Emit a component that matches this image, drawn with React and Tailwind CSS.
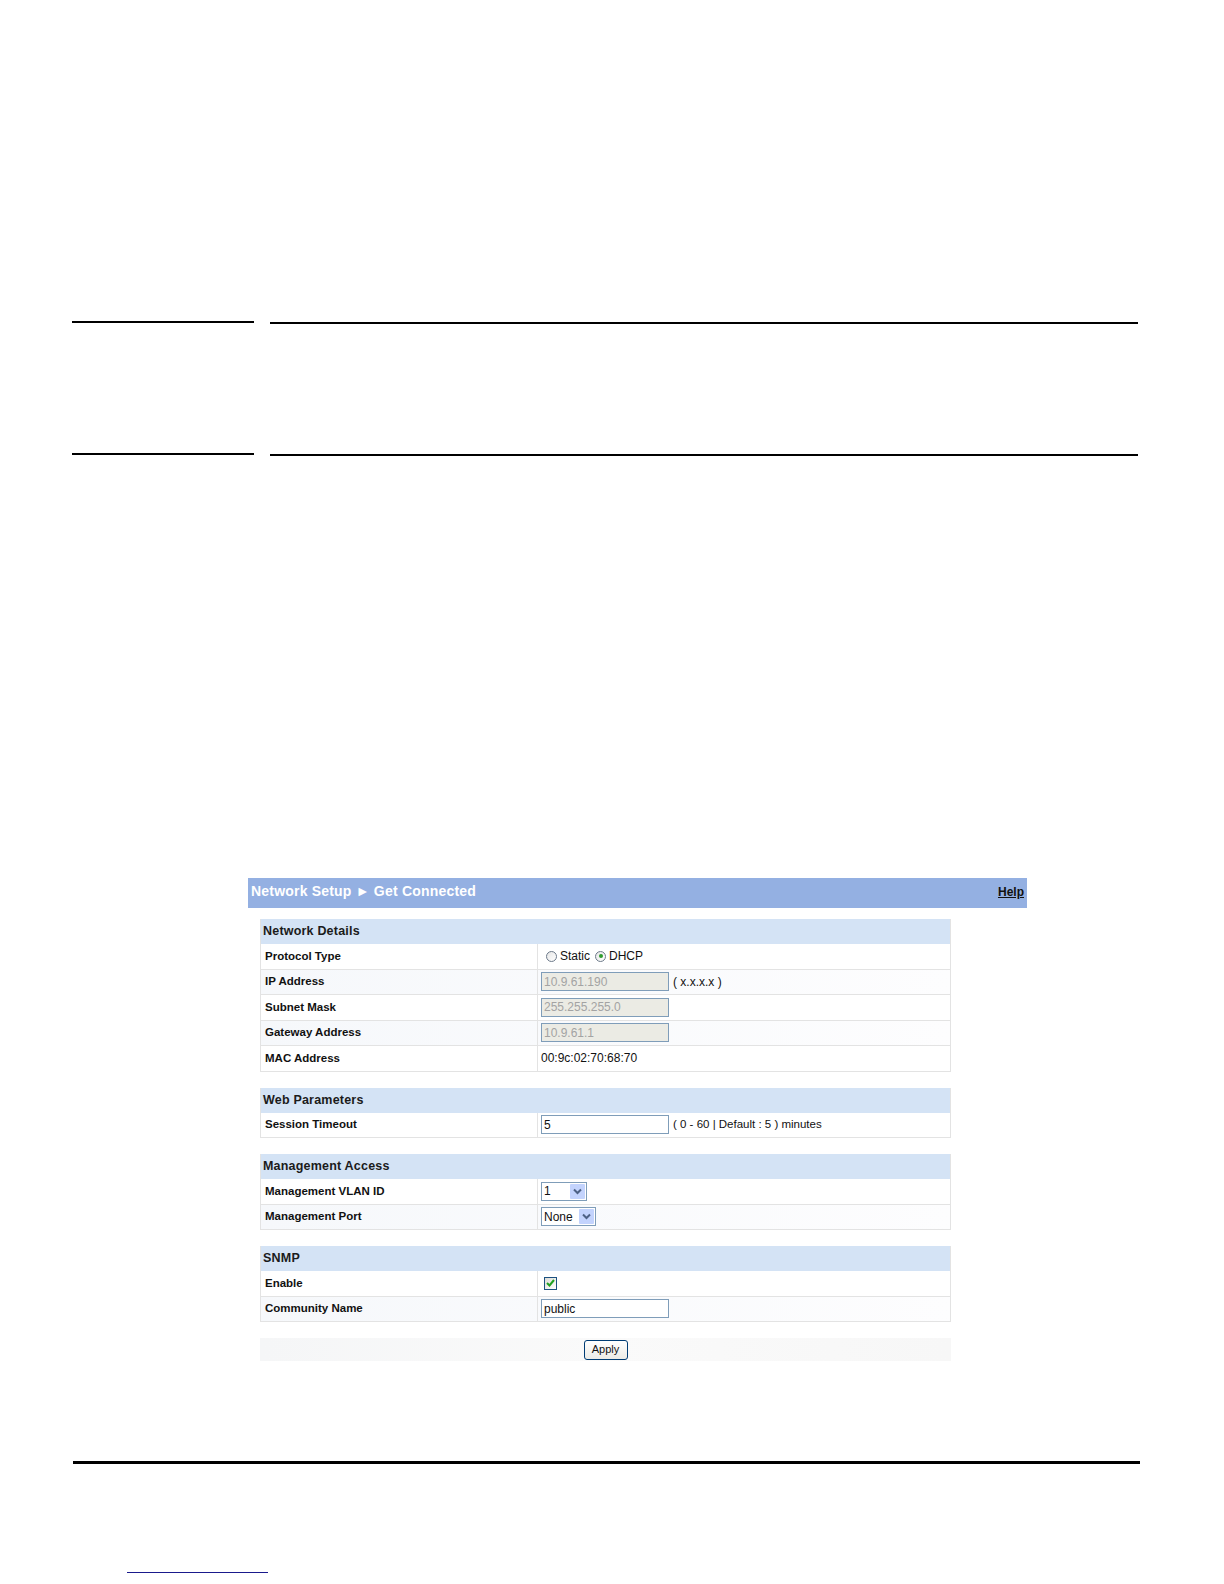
import { useState } from "react";

const font = { fontFamily: '"Liberation Sans", Arial, sans-serif' };

function Rule() {
  return (
    <div className="flex items-start h-[3px] pl-[72px]">
      <div className="w-[182px] h-[2px] bg-black" />
      <div className="ml-[16px] mt-[1px] w-[868px] h-[2px] bg-black" />
    </div>
  );
}

function Section({ title, children }) {
  return (
    <div className="border-l border-r border-[#e3e3e3]">
      <div className="h-[25px] bg-[#d4e3f5] flex items-center pl-[2px] text-[12.5px] font-bold text-[#1b1b1b] tracking-[0.2px]">
        {title}
      </div>
      {children}
    </div>
  );
}

function Row({ label, shaded, children }) {
  return (
    <div
      className={
        "flex h-[25.5px] border-b border-[#e3e3e3] " +
        (shaded ? "bg-gradient-to-r from-[#f6f8fb] to-[#fdfdfe]" : "bg-white")
      }
    >
      <div className="w-[277px] shrink-0 border-r border-[#e3e3e3] flex items-center pl-[4px] text-[11.5px] font-bold text-[#111]">
        {label}
      </div>
      <div className="flex-1 flex items-center pl-[3px] text-[12px] text-[#111]">
        {children}
      </div>
    </div>
  );
}

function TextBox({ value, disabled }) {
  return (
    <div
      className={
        "w-[128px] h-[19px] border border-[#7f9db9] flex items-center pl-[2px] text-[12px] " +
        (disabled ? "bg-[#ebebe4] text-[#a3a3a3]" : "bg-white text-[#111]")
      }
    >
      {value}
    </div>
  );
}

function Radio({ checked }) {
  return (
    <span className="inline-flex items-center justify-center w-[11px] h-[11px] rounded-full border border-[#6d7a8a] bg-gradient-to-br from-[#e6e6e6] to-white">
      {checked && <span className="w-[4px] h-[4px] rounded-full bg-[#2e9b2e]" />}
    </span>
  );
}

function Select({ value, width }) {
  return (
    <div
      className="h-[19px] border border-[#7f9db9] bg-white flex items-center justify-between pl-[2px] pr-[1px] text-[12px] text-[#111]"
      style={{ width }}
    >
      <span>{value}</span>
      <span className="w-[15px] h-[15px] bg-[#c3d3fd] flex items-center justify-center rounded-[1px]">
        <svg width="9" height="7" viewBox="0 0 9 7">
          <path d="M1 1.5 L4.5 5 L8 1.5" fill="none" stroke="#4d6185" strokeWidth="2" />
        </svg>
      </span>
    </div>
  );
}

export default function App() {
  const [enabled] = useState(true);

  return (
    <div className="w-full h-[1584px] bg-white pt-[321px]" style={font}>
      <Rule />
      <div className="mt-[129px]">
        <Rule />
      </div>

      {/* Screenshot of the web UI */}
      <div className="mt-[422px] ml-[248px] w-[779px]">
        <div className="h-[30px] bg-[#94b0e2] flex items-center justify-between pl-[3px] pr-[3px]">
          <span className="text-white font-bold text-[14px] tracking-[0.2px] -mt-[3px]">
            Network Setup ► Get Connected
          </span>
          <span className="text-[12px] font-bold underline text-[#111] -mt-[2px]">Help</span>
        </div>

        <div className="mt-[11px] ml-[12px] w-[691px] flex flex-col gap-[16px]">
          <Section title="Network Details">
            <Row label="Protocol Type">
              <div className="flex items-center pl-[5px] text-[12px]">
                <Radio />
                <span className="ml-[3px] mr-[5px]">Static</span>
                <Radio checked />
                <span className="ml-[3px]">DHCP</span>
              </div>
            </Row>
            <Row label="IP Address" shaded>
              <TextBox value="10.9.61.190" disabled />
              <span className="ml-[4px]">( x.x.x.x )</span>
            </Row>
            <Row label="Subnet Mask">
              <TextBox value="255.255.255.0" disabled />
            </Row>
            <Row label="Gateway Address" shaded>
              <TextBox value="10.9.61.1" disabled />
            </Row>
            <Row label="MAC Address">
              <span>00:9c:02:70:68:70</span>
            </Row>
          </Section>

          <Section title="Web Parameters">
            <Row label="Session Timeout">
              <TextBox value="5" />
              <span className="ml-[4px] text-[11.5px]">( 0 - 60 | Default : 5 ) minutes</span>
            </Row>
          </Section>

          <Section title="Management Access">
            <Row label="Management VLAN ID">
              <Select value="1" width="46px" />
            </Row>
            <Row label="Management Port" shaded>
              <Select value="None" width="55px" />
            </Row>
          </Section>

          <Section title="SNMP">
            <Row label="Enable">
              <span className="ml-[3px] w-[13px] h-[13px] border border-[#1c5180] bg-gradient-to-br from-[#dcdcd7] to-white flex items-center justify-center">
                {enabled && (
                  <svg width="9" height="8" viewBox="0 0 9 8">
                    <path d="M1 4 L3.5 6.5 L8 1" fill="none" stroke="#21a121" strokeWidth="2" />
                  </svg>
                )}
              </span>
            </Row>
            <Row label="Community Name" shaded>
              <TextBox value="public" />
            </Row>
          </Section>

          <div className="h-[23px] bg-gradient-to-r from-[#f5f6f7] via-[#fafafa] to-[#f7f7f7] flex items-center justify-center">
            <button className="w-[44px] h-[20px] border border-[#003c74] rounded-[3px] bg-gradient-to-b from-white to-[#ecebe6] text-[11px] text-[#111]">
              Apply
            </button>
          </div>
        </div>
      </div>

      <div className="mt-[100px] ml-[73px] w-[1067px] h-[3px] bg-black" />
      <div className="mt-[108px] ml-[127px] w-[141px] h-[1px] bg-[#1a1a8c]" />
    </div>
  );
}
